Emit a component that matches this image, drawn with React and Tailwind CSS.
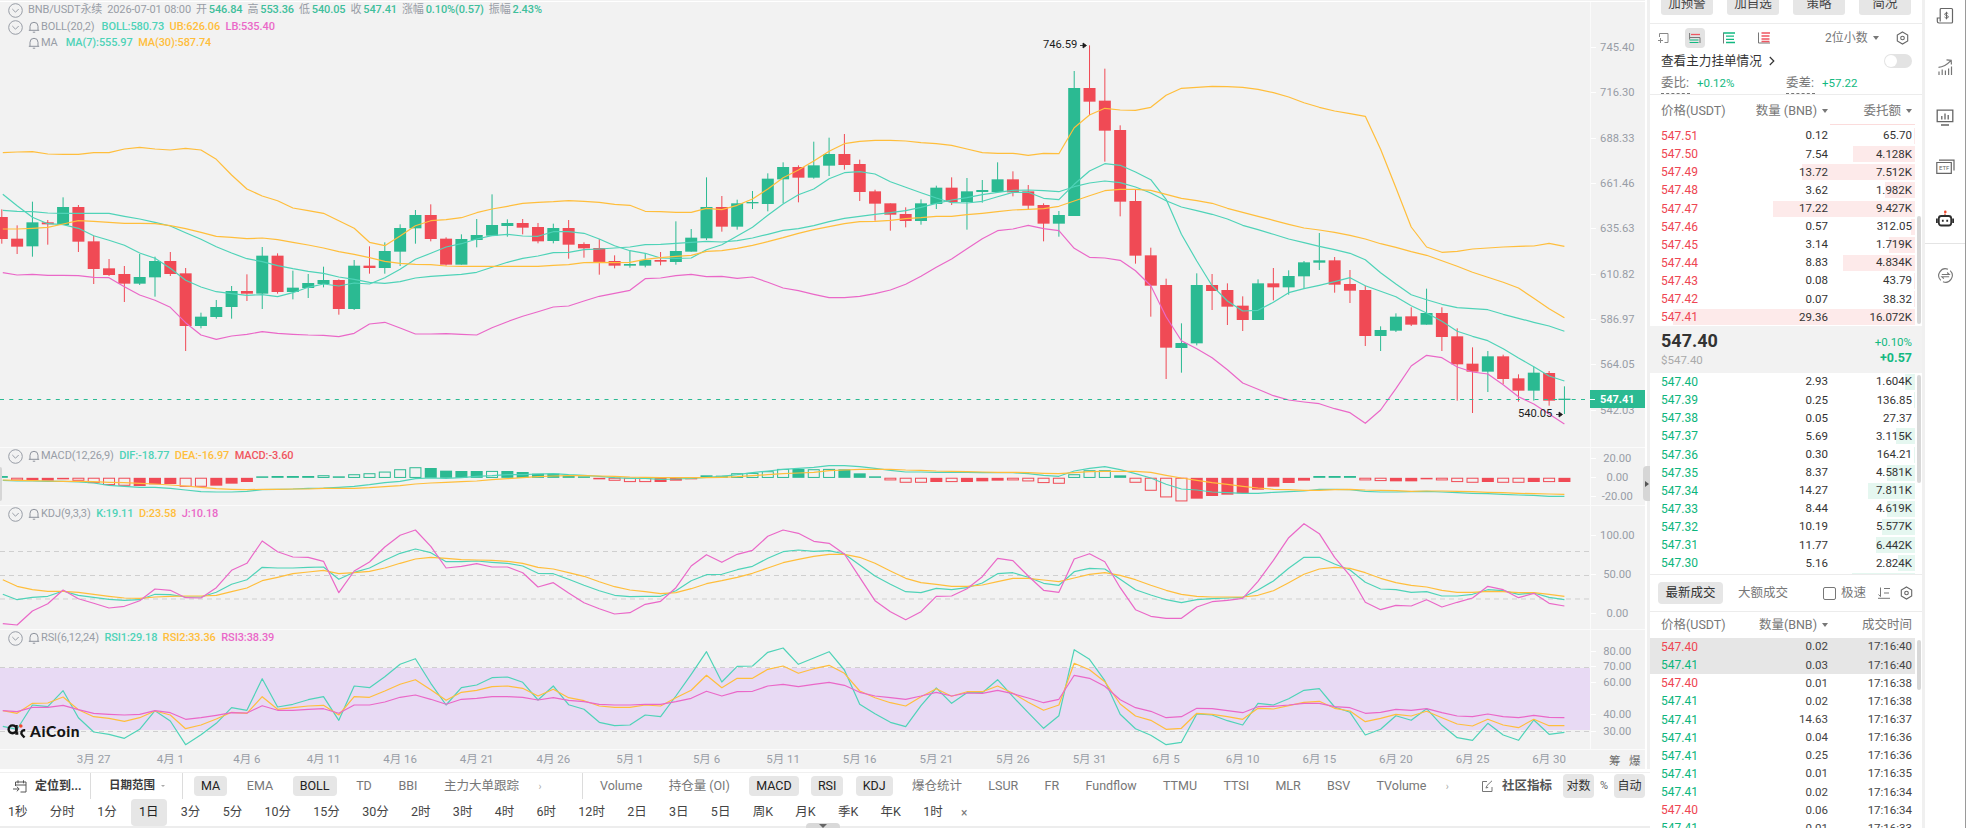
import clsx from "clsx";

const GREEN = "#2bba92";
const RED = "#f04a55";
const TEAL = "#4fd3b8";
const ORANGE = "#ffbe3c";
const PINK = "#ea68c8";

const STEP = 15.32;
const PLOT_W = 1590;
const SUB_TOP = 440;
const xAt = (i) => 1.8 + i * STEP;

// ----- Series data, y is stored in thirds of a pixel -----
// candle: direction (1 up, 0 down), high, body top, body bottom, low
const candles = [
  [0, 628, 651, 717, 731], [0, 676, 716, 740, 762], [1, 605, 667, 739, 770], [0, 660, 667, 673, 734], [1, 592, 621, 675, 675],
  [0, 615, 621, 725, 756], [0, 707, 724, 807, 852], [0, 777, 805, 825, 828], [0, 798, 822, 851, 906], [1, 762, 831, 851, 855],
  [1, 770, 783, 832, 890], [0, 756, 783, 822, 828], [0, 804, 820, 978, 1053], [1, 938, 950, 978, 985], [1, 900, 921, 951, 956],
  [1, 858, 873, 921, 956], [0, 823, 873, 881, 903], [1, 741, 767, 881, 927], [0, 760, 767, 876, 881], [1, 812, 863, 876, 898],
  [1, 822, 849, 864, 894], [1, 800, 840, 852, 862], [0, 838, 840, 927, 944], [1, 780, 797, 927, 930], [0, 739, 797, 804, 821],
  [1, 727, 753, 804, 821], [1, 673, 684, 755, 798], [1, 630, 645, 685, 731], [0, 613, 645, 717, 724], [0, 712, 716, 794, 797],
  [1, 703, 717, 794, 794], [1, 657, 705, 720, 742], [1, 583, 675, 707, 707], [1, 658, 669, 678, 710], [0, 657, 669, 683, 703],
  [0, 669, 681, 724, 730], [1, 671, 684, 723, 730], [0, 660, 684, 734, 776], [0, 727, 732, 745, 773], [0, 717, 744, 787, 824],
  [0, 766, 783, 797, 805], [1, 753, 792, 797, 803], [1, 760, 780, 797, 802], [0, 756, 780, 785, 796], [1, 664, 753, 786, 794],
  [1, 687, 713, 755, 755], [1, 532, 621, 715, 720], [0, 588, 621, 680, 695], [1, 599, 610, 680, 689], [1, 573, 606, 610, 627],
  [1, 520, 536, 612, 634], [1, 487, 501, 538, 610], [0, 496, 501, 533, 607], [1, 425, 496, 533, 536], [1, 413, 462, 497, 528],
  [0, 402, 462, 495, 509], [0, 479, 492, 576, 603], [0, 569, 574, 611, 662], [0, 610, 610, 644, 692], [0, 622, 642, 663, 682],
  [1, 598, 610, 663, 674], [1, 557, 563, 612, 627], [0, 532, 563, 606, 615], [1, 534, 574, 606, 689], [1, 540, 570, 576, 608],
  [1, 487, 538, 576, 578], [0, 514, 538, 577, 589], [0, 555, 574, 617, 627], [0, 610, 615, 671, 724], [1, 633, 645, 671, 710],
  [1, 213, 264, 648, 648], [0, 136, 264, 305, 345], [0, 206, 302, 392, 485], [0, 376, 390, 605, 649], [0, 568, 603, 767, 791],
  [0, 743, 766, 857, 950], [0, 836, 855, 1043, 1137], [1, 970, 1029, 1044, 1118], [1, 820, 855, 1030, 1036], [0, 822, 855, 873, 930],
  [0, 850, 870, 920, 975], [0, 889, 917, 960, 993], [1, 838, 850, 960, 960], [0, 804, 850, 862, 901], [1, 811, 828, 862, 884],
  [1, 783, 787, 829, 865], [1, 699, 781, 788, 810], [0, 771, 781, 854, 878], [0, 810, 852, 872, 909], [0, 857, 870, 1008, 1038],
  [1, 979, 990, 1008, 1053], [1, 940, 950, 992, 996], [0, 922, 949, 974, 978], [1, 866, 939, 974, 974], [0, 922, 939, 1011, 1053],
  [0, 985, 1009, 1093, 1202], [0, 1042, 1091, 1115, 1239], [1, 1053, 1069, 1115, 1176], [0, 1064, 1069, 1137, 1152], [0, 1123, 1135, 1172, 1205],
  [1, 1100, 1118, 1172, 1202], [0, 1113, 1119, 1202, 1217], [1, 1159, 1196, 1200, 1242],
];

const ub = [
  458, 456, 455, 462, 463, 463, 458, 458, 447, 442, 447, 450, 445, 450, 478, 525, 567, 588, 602, 624, 632, 640, 662, 685, 727, 737, 708, 677, 662, 659, 653, 638, 627, 619, 610, 607, 605,
  602, 604, 607, 613, 616, 634, 635, 637, 637, 625, 629, 616, 597, 567, 533, 510, 483, 454, 431, 424, 421, 421, 423, 428, 431, 436, 447, 458, 460, 460, 466, 460, 461, 383, 345,
  325, 330, 331, 322, 286, 265, 262, 259, 260, 262, 268, 278, 291, 308, 322, 333, 341, 349, 448, 563, 681, 741, 757, 754, 747, 744, 741, 739, 738, 730, 739,
];
const boll = [
  631, 634, 635, 639, 640, 640, 640, 640, 649, 657, 667, 678, 698, 718, 740, 759, 776, 785, 797, 806, 814, 820, 831, 838, 847, 850, 845, 834, 829, 826, 823, 817, 802, 787, 775, 768, 758,
  757, 749, 747, 744, 741, 734, 733, 730, 727, 724, 726, 722, 714, 703, 691, 686, 677, 665, 655, 649, 643, 638, 632, 622, 610, 600, 593, 584, 577, 571, 570, 572, 575, 560, 549,
  543, 548, 561, 579, 602, 621, 632, 643, 657, 676, 689, 703, 717, 728, 739, 749, 760, 779, 818, 852, 884, 899, 913, 923, 926, 929, 943, 955, 967, 978, 994,
];
const lb = [
  818, 825, 823, 826, 826, 827, 832, 833, 860, 885, 901, 922, 968, 1005, 1018, 1008, 1003, 995, 1000, 1003, 1005, 1006, 1010, 1000, 972, 967, 984, 1002, 1002, 1001, 1003, 1005, 983, 965, 949, 935, 921,
  918, 903, 889, 880, 871, 836, 834, 827, 823, 830, 829, 835, 831, 847, 864, 872, 883, 893, 893, 889, 881, 870, 853, 829, 802, 777, 746, 716, 692, 687, 676, 686, 692, 745, 772,
  774, 781, 812, 857, 950, 1022, 1046, 1073, 1109, 1149, 1168, 1187, 1200, 1206, 1211, 1226, 1238, 1270, 1230, 1166, 1098, 1066, 1073, 1101, 1116, 1122, 1154, 1190, 1212, 1242, 1272,
];
const ma7 = [
  583, 617, 652, 671, 674, 685, 707, 721, 736, 759, 775, 805, 841, 861, 875, 881, 886, 884, 890, 878, 862, 852, 858, 849, 852, 833, 808, 778, 760, 741, 731, 717, 707, 703, 708, 709, 695,
  695, 700, 717, 737, 752, 760, 774, 775, 774, 749, 734, 708, 682, 646, 612, 584, 567, 536, 518, 515, 522, 545, 562, 578, 594, 608, 609, 604, 590, 577, 577, 595, 599, 553, 513,
  491, 496, 516, 539, 598, 703, 783, 857, 903, 933, 931, 907, 878, 866, 856, 845, 833, 857, 874, 890, 917, 939, 964, 994, 1009, 1022, 1046, 1074, 1100, 1128, 1143,
];
const ma30 = [
  687, 687, 685, 682, 672, 662, 664, 667, 670, 670, 671, 677, 686, 697, 709, 712, 716, 714, 719, 727, 735, 744, 755, 763, 773, 784, 790, 793, 794, 798, 799, 799, 799, 799, 799, 799, 796,
  794, 788, 787, 788, 787, 778, 773, 769, 766, 754, 752, 745, 736, 725, 713, 700, 689, 680, 671, 665, 664, 661, 656, 653, 649, 649, 644, 640, 635, 630, 628, 626, 619, 603, 587,
  572, 568, 568, 571, 583, 595, 602, 610, 625, 637, 649, 661, 673, 684, 690, 697, 706, 717, 731, 742, 755, 766, 782, 799, 817, 832, 847, 864, 895, 926, 953,
];

// macd bar: far edge from the zero line, negative means hollow
const macdBars = [
  108, -121, 121, 122, 117, -122, -129, -135, -137, 138, 133, 132, -140, -140, 137, 131, 126, 109, 108, 108, 108, -106, 109, -103, -100, -95, -88, -82, 84, 92, 93, 93, -93, 93, 96, 101, 101,
  107, 109, 118, -122, -126, -126, 126, 122, 117, 106, 107, -100, -99, -94, -87, 87, -88, -87, 88, 100, 109, -121, -128, -128, 126, -126, 126, 124, 122, -121, -124, -129, -131, -103, -91,
  -91, 106, -128, -152, -172, -184, 176, 168, 164, 160, 149, 140, 129, 122, 108, 108, 108, -121, -123, 124, 124, 118, -121, -126, -128, 126, -128, -128, 126, -126, 126,
];
const dif = [
  121, 123, 123, 124, 124, 126, 129, 136, 139, 142, 142, 145, 150, 155, 156, 156, 154, 149, 148, 147, 145, 144, 142, 139, 134, 128, 124, 116, 114, 115, 113, 109, 107, 104, 104, 102, 101,
  104, 106, 109, 113, 115, 115, 118, 117, 115, 112, 109, 104, 98, 93, 88, 85, 82, 77, 77, 80, 85, 91, 96, 96, 97, 97, 97, 98, 98, 98, 101, 106, 109, 93, 85,
  80, 89, 101, 114, 133, 147, 150, 156, 158, 160, 160, 157, 155, 153, 148, 148, 149, 154, 156, 156, 155, 154, 156, 158, 160, 161, 163, 165, 166, 169, 169,
];
const dea = [
  120, 121, 122, 123, 124, 124, 125, 127, 128, 130, 132, 135, 138, 142, 146, 148, 149, 148, 148, 147, 147, 145, 145, 145, 143, 140, 137, 132, 129, 127, 125, 123, 119, 116, 113, 110, 108,
  107, 107, 108, 109, 111, 112, 113, 113, 113, 113, 112, 110, 107, 104, 101, 99, 97, 92, 90, 88, 88, 88, 90, 91, 93, 94, 95, 96, 97, 97, 98, 100, 101, 98, 95,
  94, 94, 94, 97, 106, 114, 121, 128, 133, 139, 144, 148, 149, 151, 151, 149, 148, 150, 151, 152, 154, 153, 153, 154, 155, 157, 158, 160, 161, 162, 163,
];

const kLine = [
  463, 479, 472, 469, 453, 466, 472, 478, 481, 479, 463, 464, 471, 471, 457, 433, 419, 382, 384, 384, 382, 381, 418, 397, 384, 361, 340, 327, 338, 365, 365, 363, 367, 370, 378, 400, 401,
  418, 436, 452, 466, 470, 469, 469, 452, 422, 404, 403, 389, 379, 355, 335, 330, 334, 332, 342, 375, 408, 433, 455, 458, 445, 449, 443, 429, 401, 398, 412, 430, 436, 395, 385,
  387, 418, 449, 465, 479, 488, 479, 476, 474, 472, 450, 423, 385, 352, 352, 372, 390, 427, 447, 449, 457, 455, 468, 468, 463, 449, 452, 463, 459, 472, 479,
];
const dLine = [
  419, 439, 449, 454, 454, 457, 463, 469, 474, 475, 471, 469, 468, 468, 466, 455, 444, 422, 412, 401, 396, 391, 401, 398, 394, 384, 370, 357, 352, 355, 359, 360, 361, 364, 370, 382, 387,
  398, 409, 425, 440, 450, 455, 461, 458, 446, 431, 422, 412, 400, 384, 368, 358, 349, 343, 343, 352, 370, 393, 415, 428, 433, 439, 439, 435, 425, 415, 415, 420, 425, 414, 403,
  398, 406, 419, 436, 451, 463, 469, 471, 471, 471, 466, 452, 428, 403, 387, 382, 385, 398, 415, 428, 436, 441, 451, 457, 457, 454, 455, 458, 458, 463, 469,
];
const jLine = [
  551, 555, 513, 491, 450, 476, 490, 504, 499, 482, 447, 451, 473, 474, 443, 391, 370, 303, 335, 351, 352, 364, 458, 393, 366, 321, 286, 270, 319, 384, 379, 371, 381, 381, 398, 441, 428,
  459, 488, 506, 522, 518, 493, 484, 443, 378, 344, 367, 343, 331, 289, 270, 280, 304, 310, 342, 412, 482, 515, 539, 515, 469, 468, 446, 410, 355, 362, 408, 451, 457, 357, 341,
  365, 443, 509, 529, 535, 535, 501, 485, 481, 475, 424, 361, 293, 251, 281, 352, 407, 487, 509, 496, 498, 479, 501, 487, 474, 439, 449, 473, 460, 490, 498,
];

const rsi1 = [
  859, 868, 795, 800, 752, 833, 876, 883, 895, 868, 812, 843, 914, 884, 850, 803, 811, 716, 801, 793, 779, 770, 841, 738, 743, 710, 673, 656, 730, 795, 743, 735, 713, 711, 727, 780, 738,
  794, 808, 847, 857, 855, 825, 830, 768, 703, 635, 726, 679, 678, 637, 624, 673, 654, 635, 690, 793, 821, 847, 860, 797, 744, 790, 758, 758, 719, 770, 818, 865, 827, 629, 658,
  722, 823, 866, 886, 914, 907, 822, 825, 842, 855, 790, 795, 776, 751, 746, 801, 817, 885, 868, 827, 841, 806, 856, 893, 901, 850, 885, 901, 840, 883, 877,
];
const rsi2 = [
  812, 820, 790, 789, 771, 809, 830, 835, 844, 833, 813, 825, 866, 855, 837, 817, 820, 770, 808, 803, 798, 796, 825, 770, 772, 753, 733, 719, 749, 781, 757, 751, 740, 738, 745, 768, 748,
  773, 782, 798, 802, 802, 795, 798, 773, 751, 706, 743, 715, 715, 688, 678, 700, 686, 676, 700, 753, 773, 788, 798, 770, 746, 769, 755, 755, 738, 760, 787, 811, 795, 670, 689,
  725, 792, 828, 841, 868, 865, 820, 823, 830, 838, 805, 807, 797, 787, 784, 805, 813, 845, 835, 823, 828, 814, 833, 852, 858, 838, 855, 863, 838, 857, 857,
];
const rsi3 = [
  812, 815, 802, 802, 796, 809, 820, 823, 825, 823, 812, 818, 838, 833, 826, 818, 819, 797, 811, 811, 808, 806, 820, 795, 795, 786, 772, 765, 778, 793, 778, 775, 770, 770, 772, 780, 773,
  781, 785, 793, 795, 795, 793, 793, 785, 775, 754, 768, 755, 754, 738, 733, 740, 733, 727, 736, 757, 768, 773, 778, 768, 757, 768, 759, 760, 751, 761, 774, 788, 778, 706, 715,
  739, 779, 803, 814, 833, 830, 805, 806, 812, 818, 800, 799, 795, 790, 790, 800, 803, 820, 817, 808, 811, 806, 818, 828, 830, 822, 830, 833, 826, 832, 833,
];

const dates = ["3月 27", "4月 1", "4月 6", "4月 11", "4月 16", "4月 21", "4月 26", "5月 1", "5月 6", "5月 11", "5月 16", "5月 21", "5月 26", "5月 31", "6月 5", "6月 10", "6月 15", "6月 20", "6月 25", "6月 30"];

const asks = [
  ["547.51", "0.12", "65.70", 1],
  ["547.50", "7.54", "4.128K", 62],
  ["547.49", "13.72", "7.512K", 113],
  ["547.48", "3.62", "1.982K", 30],
  ["547.47", "17.22", "9.427K", 142],
  ["547.46", "0.57", "312.05", 4.5],
  ["547.45", "3.14", "1.719K", 26],
  ["547.44", "8.83", "4.834K", 72.5],
  ["547.43", "0.08", "43.79", 0.7],
  ["547.42", "0.07", "38.32", 0.6],
  ["547.41", "29.36", "16.072K", 242],
];
const bids = [
  ["547.40", "2.93", "1.604K", 10],
  ["547.39", "0.25", "136.85", 1],
  ["547.38", "0.05", "27.37", 0],
  ["547.37", "5.69", "3.115K", 19],
  ["547.36", "0.30", "164.21", 1],
  ["547.35", "8.37", "4.581K", 28],
  ["547.34", "14.27", "7.811K", 47],
  ["547.33", "8.44", "4.619K", 28],
  ["547.32", "10.19", "5.577K", 33.5],
  ["547.31", "11.77", "6.442K", 39],
  ["547.30", "5.16", "2.824K", 17],
];
const trades = [
  ["547.40", "0.02", "17:16:40", 0],
  ["547.41", "0.03", "17:16:40", 1],
  ["547.40", "0.01", "17:16:38", 0],
  ["547.41", "0.02", "17:16:38", 1],
  ["547.41", "14.63", "17:16:37", 1],
  ["547.41", "0.04", "17:16:36", 1],
  ["547.41", "0.25", "17:16:36", 1],
  ["547.41", "0.01", "17:16:35", 1],
  ["547.41", "0.02", "17:16:34", 1],
  ["547.40", "0.06", "17:16:34", 0],
  ["547.41", "0.01", "17:16:33", 1],
];

// ----- Chart helpers -----
const Line = ({ data, color, top = 0 }) => (
  <polyline
    points={data.map((v, i) => `${i === 0 ? 2.8 : xAt(i).toFixed(1)},${(v / 3 - top).toFixed(1)}`).join(" ")}
    fill="none"
    stroke={color}
    strokeWidth="1.2"
    strokeLinejoin="round"
  />
);

const AxisLabels = ({ items }) =>
  items.map(([text, y]) => (
    <g key={text}>
      <path d={`M1591 ${Math.round(y) + 0.5}h5`} stroke="#ffffff" />
      <text x="1617.3" y={y + 4} textAnchor="middle" className="fill-[#989da6] text-[11.2px]">{text}</text>
    </g>
  ));

const Dashed = ({ y }) => <path d={`M0 ${y}H${PLOT_W}`} stroke="#cfcfcf" strokeDasharray="5 4" />;

const Toggle = () => (
  <svg width="15" height="15" viewBox="0 0 15 15" className="mr-[5px] shrink-0" fill="none" stroke="#989da6">
    <circle cx="7.5" cy="7.5" r="6.8" />
    <path d="M4.3 6l3.2 3.2L10.7 6" />
  </svg>
);

const BellIcon = () => (
  <svg width="12" height="12" viewBox="0 0 12 12" className="mr-px shrink-0" fill="none" stroke="#8d929c">
    <path d="M2 9.3V5.3a4 4 0 0 1 8 0v4M.8 9.3h10.4M4.8 11.2h2.4" />
  </svg>
);

const Legend = ({ name, values, className, gap = "mr-[5.5px]", toggle = true }) => (
  <div className={clsx("absolute left-[8px] flex h-4 items-center whitespace-nowrap text-[11px] leading-4 tracking-[-0.1px] text-[#989da6]", className)}>
    {toggle ? <Toggle /> : <div className="w-5" />}
    <BellIcon />
    <span className={gap}>{name}</span>
    {values.map(([text, color]) => (
      <span key={text} className={clsx("mr-[5.5px] font-medium", color)}>{text}</span>
    ))}
  </div>
);

const PricePanel = () => {
  const quote = [["开", "546.84"], ["高", "553.36"], ["低", "540.05"], ["收", "547.41"], ["涨幅", "0.10%(0.57)"], ["振幅", "2.43%"]];
  const labels = [["745.40", 47], ["716.30", 92.3], ["688.33", 137.7], ["661.46", 183], ["635.63", 228.3], ["610.82", 273.7], ["586.97", 319], ["564.05", 364.3], ["542.03", 410]];
  return (
    <div className="relative h-[447px]">
      <svg width="1645" height="447" className="block">
        <path d="M0 1.5H1645" stroke="#fff" />
        <path d="M1590.5 2V447" stroke="#fafafa" />
        {candles.map(([up, high, top, bottom, low], i) => (
          <g key={i} fill={up ? GREEN : RED}>
            <rect x={xAt(i) - 0.5} y={high / 3} width="1" height={(low - high) / 3} />
            <rect x={xAt(i) - 6} y={top / 3} width="12" height={Math.max((bottom - top) / 3, 1)} />
          </g>
        ))}
        <Line data={boll} color={TEAL} />
        <Line data={ub} color={ORANGE} />
        <Line data={lb} color={PINK} />
        <Line data={ma7} color={TEAL} />
        <Line data={ma30} color={ORANGE} />
        <path d="M0 399.5H1590" stroke={GREEN} strokeDasharray="4 5.3" />
        <AxisLabels items={labels} />
        <rect x="1590" y="390" width="55" height="18" fill={GREEN} />
        <path d="M1590 399.5h5" stroke="#fff" />
        <text x="1617.3" y="403" textAnchor="middle" className="fill-white text-[11px] font-bold">547.41</text>
        <g className="fill-[#1c1c1c] text-[11.2px]">
          <text x="1043" y="48.3">746.59</text>
          <text x="1518" y="417">540.05</text>
        </g>
        <path d="M1080 45.5h6m-3-2.500l3.500 2.500-3.500 2.500zM1556 414.500h6m-3-2.500l3.500 2.500-3.500 2.500z" fill="#1c1c1c" stroke="#1c1c1c" strokeWidth=".8" />
      </svg>
      <div className="absolute left-[8px] top-[2px] flex h-4 items-center whitespace-nowrap text-[11px] leading-4 tracking-[-0.12px] text-[#989da6]">
        <Toggle />
        <span className="mr-[5px]">BNB/USDT永续</span>
        <span className="mr-[5px]">2026-07-01 08:00</span>
        {quote.map(([label, value]) => (
          <span key={label} className="mr-[5px]">
            {label}
            <span className="ml-[2px] font-medium text-[#3fbf9c]">{value}</span>
          </span>
        ))}
      </div>
      <Legend className="top-[19px]" gap="mr-[7px]" name="BOLL(20,2)" values={[["BOLL:580.73", "text-[#4fd3b8]"], ["UB:626.06", "text-[#ffbe3c]"], ["LB:535.40", "text-[#ea68c8]"]]} />
      <Legend className="top-[35px]" gap="mr-[8px]" toggle={false} name="MA" values={[["MA(7):555.97", "text-[#4fd3b8]"], ["MA(30):587.74", "text-[#ffbe3c]"]]} />
    </div>
  );
};

const MacdPanel = () => {
  const top = 447 - SUB_TOP;
  const zero = 113.5;
  return (
    <div className="relative h-[58px]">
      <svg width="1645" height="58" className="block">
        <path d="M0 .5H1645M1590.5 0V58" stroke="#fbfbfb" />
        {macdBars.map((v, i) => {
          const edge = Math.abs(v);
          const color = edge < zero ? GREEN : RED;
          const y = Math.min(edge, zero) / 3 - top;
          const h = Math.max(Math.abs(edge - zero) / 3, 1.5);
          return v < 0 ? (
            <rect key={i} x={xAt(i) - 5.5} y={y + 0.4} width="11" height={Math.max(h - 0.8, 1)} fill="none" stroke={color} />
          ) : (
            <rect key={i} x={xAt(i) - 6} y={y} width="12" height={h} fill={color} />
          );
        })}
        <Line data={dif} color={TEAL} top={top} />
        <Line data={dea} color={ORANGE} top={top} />
        <AxisLabels items={[["20.00", 11.4], ["0.00", 30.4], ["-20.00", 49.4]]} />
      </svg>
      <Legend className="top-[1px]" name="MACD(12,26,9)" values={[["DIF:-18.77", "text-[#4fd3b8]"], ["DEA:-16.97", "text-[#ffbe3c]"], ["MACD:-3.60", "text-[#f0555f]"]]} />
    </div>
  );
};

const KdjPanel = () => {
  const top = 505 - SUB_TOP;
  return (
    <div className="relative h-[124px]">
      <svg width="1645" height="124" className="block">
        <path d="M0 .5H1645M1590.5 0V124" stroke="#fbfbfb" />
        <Dashed y={46.5} />
        <Dashed y={70.5} />
        <Dashed y={94} />
        <Line data={kLine} color={TEAL} top={top} />
        <Line data={dLine} color={ORANGE} top={top} />
        <Line data={jLine} color={PINK} top={top} />
        <AxisLabels items={[["100.00", 30.4], ["50.00", 69.4], ["0.00", 108.4]]} />
      </svg>
      <Legend className="top-[1px]" name="KDJ(9,3,3)" values={[["K:19.11", "text-[#4fd3b8]"], ["D:23.58", "text-[#ffbe3c]"], ["J:10.18", "text-[#ea68c8]"]]} />
    </div>
  );
};

const RsiPanel = () => {
  const top = 629 - SUB_TOP;
  return (
    <div className="relative h-[120px]">
      <svg width="1645" height="120" className="block">
        <path d="M0 .5H1645M1590.5 0V120" stroke="#fbfbfb" />
        <rect y="39" width={PLOT_W} height="62" fill="#e8daf4" />
        <Dashed y={38.5} />
        <Dashed y={102.5} />
        <Line data={rsi1} color={TEAL} top={top} />
        <Line data={rsi2} color={ORANGE} top={top} />
        <Line data={rsi3} color={PINK} top={top} />
        <AxisLabels items={[["80.00", 22], ["70.00", 37.3], ["60.00", 53.3], ["40.00", 85.3], ["30.00", 101.7]]} />
      </svg>
      <Legend className="top-[1px]" name="RSI(6,12,24)" values={[["RSI1:29.18", "text-[#4fd3b8]"], ["RSI2:33.36", "text-[#ffbe3c]"], ["RSI3:38.39", "text-[#ea68c8]"]]} />
      <div className="absolute left-[7px] top-[94px] flex h-[16px] items-center gap-[4px]">
        <svg width="19" height="15" viewBox="0 0 19 15" fill="none" stroke="#151515" strokeWidth="2.4">
          <circle cx="5.5" cy="5.3" r="3.9" />
          <path d="M9.5 1v8.500h1.800" />
          <path d="M18.200 6.200h-1.200a2.800 2.800 0 0 0-1.800 4.800l2.300 2.500" />
          <circle cx="13.8" cy="2" r="1.8" fill="#f0492f" stroke="none" />
        </svg>
        <span className="pt-px font-['Lato'] text-[15.500px] font-black leading-none tracking-[0.6px] text-[#151515]">AiCoin</span>
      </div>
    </div>
  );
};

// ----- Toolbars under the chart -----
const Tag = ({ children, active }) => (
  <span className={clsx("flex h-5 shrink-0 items-center rounded px-[7px]", active ? "bg-[#e6e6e6] text-[#222]" : "text-[#777]")}>{children}</span>
);

const mainTags = ["MA", "EMA", "BOLL", "TD", "BBI", "主力大单跟踪"];
const subTags = ["Volume", "持仓量 (OI)", "MACD", "RSI", "KDJ", "爆仓统计", "LSUR", "FR", "Fundflow", "TTMU", "TTSI", "MLR", "BSV", "TVolume"];
const activeTags = ["MA", "BOLL", "MACD", "RSI", "KDJ"];
const periods = ["1秒", "分时", "1分", "1日", "3分", "5分", "10分", "15分", "30分", "2时", "3时", "4时", "6时", "12时", "2日", "3日", "5日", "周K", "月K", "季K", "年K", "1时"];

const IndicatorBar = () => (
  <div className="mt-[3px] flex h-[27px] items-center border-t border-[#f0f0f0] text-[12.5px]">
    <div className="flex h-full w-[91px] items-center border-r border-[#dcdcdc] pl-[13px] font-bold text-[#3c3c3c]">
      <svg width="14" height="13" viewBox="0 0 14 13" className="mr-2" fill="none" stroke="#555">
        <path d="M2.500 6V2h10.500v10H7.500M5 .3v3M10.500.3v3M2.500 5h10.500M0 9h6M3.800 6.700L6.200 9l-2.400 2.300" />
      </svg>
      <span className="text-[12px]">定位到...</span>
    </div>
    <div className="flex h-full w-[92px] items-center border-r border-[#dcdcdc] pl-[18px] text-[11.5px] font-bold text-[#3c3c3c]">
      日期范围
      <span className="ml-[6px] border-x-[2px] border-t-[2px] border-x-transparent border-t-[#aaa]" />
    </div>
    <div className="flex w-[399px] items-center gap-[12.6px] pl-[11px]">
      {mainTags.map((t) => <Tag key={t} active={activeTags.includes(t)}>{t}</Tag>)}
      <span className="text-[10px] text-[#aaa]">›</span>
    </div>
    <div className="flex h-full w-[892px] items-center gap-[12.3px] border-l border-[#dcdcdc] pl-[10px]">
      {subTags.map((t) => <Tag key={t} active={activeTags.includes(t)}>{t}</Tag>)}
      <span className="text-[10px] text-[#aaa]">›</span>
    </div>
    <div className="flex items-center pl-[8px] text-[#555]">
      <svg width="11" height="12" viewBox="0 0 11 12" fill="none" stroke="#777">
        <path d="M5 1.500H.5v10h9.500V7M4 8l1-2.500L10 .8M3.800 8l2.400-.6" />
      </svg>
      <span className="ml-[9px] font-bold text-[#555]">社区指标</span>
    </div>
    <div className="ml-auto mr-[5px] flex items-center text-[#333]">
      <span className="flex h-6 w-[31px] items-center justify-center rounded-sm bg-[#e6e6e6] text-[12px]">对数</span>
      <span className="w-[20px] text-center text-[11px] text-[#666]">%</span>
      <span className="flex h-6 w-[31px] items-center justify-center rounded-sm bg-[#e6e6e6] text-[12px]">自动</span>
    </div>
  </div>
);

const PeriodBar = () => (
  <div className="flex h-[27px] items-center gap-[6.3px] text-[12.5px] text-[#444]">
    {periods.map((p) => (
      <span key={p} className={clsx("flex h-full shrink-0 items-center rounded px-2", p === "1日" && "bg-[#e6e6e6] text-[#222]")}>{p}</span>
    ))}
    <span className="pl-1 text-[12px] text-[#777]">×</span>
  </div>
);

const ChartArea = () => (
  <div className="relative flex w-[1650px] shrink-0 flex-col bg-[#f0f0f0]">
    <div className="w-[1647px] border-r-2 border-white bg-[#f2f2f2]">
      <PricePanel />
      <MacdPanel />
      <KdjPanel />
      <RsiPanel />
      <svg width="1645" height="20" className="block text-[11.5px]">
        <path d="M0 .5H1645" stroke="#fbfbfb" />
        {dates.map((d, i) => (
          <text key={d} x={xAt(6 + i * 5)} y="14" textAnchor="middle" className="fill-[#989da6]">{d}</text>
        ))}
        <text x="1609" y="15.5" className="fill-[#6f6f6f]">筹</text>
        <text x="1629" y="15.5" className="fill-[#6f6f6f]">爆</text>
      </svg>
    </div>
    <div className="h-[57px] w-[1650px] bg-white">
      <IndicatorBar />
      <PeriodBar />
    </div>
    <div className="h-0.5 bg-[#ededed]" />
    <div className="absolute left-0 top-[467px] h-[34px] w-[2px] rounded-r bg-[#d6d6d6]" />
    <div className="absolute left-[1643px] top-[466px] flex h-[35px] w-[7px] items-center justify-center rounded-l bg-[#d6d6d6]">
      <span className="border-y-[3px] border-l-[4px] border-y-transparent border-l-[#555]" />
    </div>
    <div className="absolute bottom-0 left-[806px] flex h-[5px] w-[34px] items-center justify-center rounded-t bg-[#d9d9d9]">
      <span className="border-x-[4px] border-t-[4px] border-x-transparent border-t-[#666]" />
    </div>
  </div>
);

// ----- Order book -----
const Caret = () => <span className="ml-[5px] inline-block border-x-[3.5px] border-t-[4px] border-x-transparent border-t-[#777]" />;

const HexIcon = () => (
  <svg width="13" height="14" viewBox="0 0 13 14" fill="none" stroke="#666" strokeWidth="1.1">
    <path d="M6.500 1L11.700 4v6L6.500 13 1.300 10V4z" />
    <circle cx="6.5" cy="7" r="1.8" />
  </svg>
);

const BookRow = ({ row, side }) => {
  const [price, qty, amount, depth] = row;
  return (
    <div className="relative flex h-[18.14px] items-center pl-[11px] text-[11.5px] text-[#333]">
      <div
        className={clsx("absolute right-[7px] top-[1px] h-4", side === "ask" ? "bg-[#fdeaea]" : "bg-[#e5f7f0]")}
        style={{ width: depth }}
      />
      <span className={clsx("relative w-[70px] text-[12px]", side === "ask" ? "text-[#ee4652]" : "text-[#0cb57c]")}>{price}</span>
      <span className="relative w-[97px] text-right">{qty}</span>
      <span className="relative w-[84px] text-right">{amount}</span>
    </div>
  );
};

const OrderBook = () => (
  <div className="h-[575px] overflow-hidden border-b border-[#ececec]">
    <div className="flex h-[23px] items-start gap-[14px] overflow-hidden pl-[11px]">
      {["加预警", "加自选", "策略", "简况"].map((t) => (
        <span key={t} className="-mt-[7px] flex h-[22px] w-[52px] shrink-0 items-center justify-center rounded-[3px] bg-[#e6e6e6] text-[12.5px] text-[#444]">{t}</span>
      ))}
    </div>
    <div className="flex h-[29px] items-center border-t border-[#ececec] pl-[8px]">
      <svg width="12" height="12" viewBox="0 0 12 12" fill="none" stroke="#888">
        <path d="M1.500 5V1.500h8.500v9H6.500M0 8.500h5M2.500 6v5" />
      </svg>
      <div className="ml-[15px] flex size-5 items-center justify-center rounded bg-[#e3e3e3]">
        <svg width="12" height="12" viewBox="0 0 12 12" fill="none">
          <path d="M.6 1v6.500M11 5.500V11M.6 5.500H11" stroke="#777" />
          <path d="M2 2.500h9" stroke="#ee5661" strokeWidth="1.3" />
          <path d="M.6 8h8.900M.6 10.500h8.900" stroke="#12b981" strokeWidth="1.2" />
        </svg>
      </div>
      <svg width="12" height="12" viewBox="0 0 12 12" className="ml-[18px]" fill="none">
        <path d="M.5.5v11" stroke="#777" />
        <path d="M.5 1h11.500M3 4.200h8M3 7.300h8M3 10.500h9" stroke="#12b981" strokeWidth="1.3" />
      </svg>
      <svg width="12" height="12" viewBox="0 0 12 12" className="ml-[23px]" fill="none">
        <path d="M.5.5v10.500h11.500" stroke="#777" />
        <path d="M3.500 1h8.500M3.500 4h8M3.500 7h8M3.500 9.500h8" stroke="#ee5661" strokeWidth="1.3" />
      </svg>
      <span className="ml-[55px] text-[12px] text-[#777]">2位小数</span>
      <Caret />
      <span className="ml-[17px]"><HexIcon /></span>
    </div>
    <div className="flex h-[18px] items-center pl-[11px] pr-[10px] text-[12.6px] text-[#333]">
      查看主力挂单情况
      <svg width="6" height="10" viewBox="0 0 6 10" className="ml-[7px]" fill="none" stroke="#333" strokeWidth="1.2">
        <path d="M.8 1l4 4-4 4" />
      </svg>
      <span className="ml-auto flex h-[14px] w-[28px] items-center rounded-full bg-[#e3e3e3] pl-px">
        <span className="size-3 rounded-full bg-white" />
      </span>
    </div>
    <div className="flex h-[25px] items-end border-b border-[#ececec] pl-[11px] text-[12.5px] text-[#777]">
      <span className="flex h-[22px] w-[29px] items-center border-b border-dashed border-[#777] pt-px">委比:</span>
      <span className="w-[96px] pb-[2px] pl-[7px] text-[11.5px] text-[#12b981]">+0.12%</span>
      <span className="flex h-[22px] w-[29px] items-center border-b border-dashed border-[#777] pt-px">委差:</span>
      <span className="pb-[2px] pl-[7px] text-[11.5px] text-[#12b981]">+57.22</span>
    </div>
    <div className="flex h-[29px] items-center pl-[11px] pt-[3px] text-[12.5px] text-[#777]">
      <span className="w-[82px]">价格(USDT)</span>
      <span className="flex w-[85px] items-center justify-end">数量 (BNB)<Caret /></span>
      <span className="flex w-[84px] items-center justify-end">委托额<Caret /></span>
    </div>
    <div className="ml-auto mr-[7px] h-[3px] w-[85px] border-t border-[#fbdcdc]" />
    <div className="relative h-[199px]">
      {asks.map((r) => <BookRow key={r[0]} row={r} side="ask" />)}
      <div className="absolute right-[1px] top-[89px] h-[108px] w-[4px] rounded-full bg-[#d8d8d8]" />
    </div>
    <div className="flex h-[47px] items-center justify-between bg-[#f2f2f2] pl-[11px] pr-[10px]">
      <div>
        <div className="text-[18px] font-bold leading-[18px] text-[#333]">547.40</div>
        <div className="mt-[3px] text-[11.5px] leading-[14px] text-[#aaa]">$547.40</div>
      </div>
      <div className="text-right text-[#12b981]">
        <div className="text-[11.5px] leading-[15px]">+0.10%</div>
        <div className="text-[12.5px] font-bold leading-[15px]">+0.57</div>
      </div>
    </div>
    <div className="relative h-[200px]">
      {bids.map((r) => <BookRow key={r[0]} row={r} side="bid" />)}
      <div className="ml-auto mr-[7px] mt-px h-4 w-[63px] bg-[#e5f7f0]" />
      <div className="absolute right-[1px] top-[2px] h-[108px] w-[4px] rounded-full bg-[#d8d8d8]" />
    </div>
  </div>
);

const TradeList = () => (
  <div className="h-[253px] overflow-hidden">
    <div className="flex h-[37px] items-center border-b border-[#ececec] pl-[8px] text-[12.5px] text-[#777]">
      <span className="flex h-[22px] w-[65px] items-center justify-center rounded bg-[#e6e6e6] text-[#333]">最新成交</span>
      <span className="ml-[15px]">大额成交</span>
      <span className="ml-[35px] size-[13px] rounded-[2px] border border-[#777]" />
      <span className="ml-[5px]">极速</span>
      <svg width="12" height="12" viewBox="0 0 12 12" className="ml-[12px]" fill="none" stroke="#777">
        <path d="M2.500.5v9M.5 7.500l2 2.200M6 1.500h6M6 6h5M0 11.300h12" />
      </svg>
      <span className="ml-[10px]"><HexIcon /></span>
    </div>
    <div className="flex h-[26px] items-center pl-[11px] text-[12.5px] text-[#777]">
      <span className="w-[82px]">价格(USDT)</span>
      <span className="flex w-[85px] items-center justify-end">数量(BNB)<Caret /></span>
      <span className="w-[84px] text-right">成交时间</span>
    </div>
    <div className="relative">
      {trades.map(([price, qty, time, up], i) => (
        <div key={i} className={clsx("mr-[7px] flex h-[18.15px] items-center pl-[11px] text-[11.5px] text-[#444]", i < 2 && "bg-[#e6e6e6]")}>
          <span className={clsx("w-[70px] text-[12px]", up ? "text-[#0cb57c]" : "text-[#ee4652]")}>{price}</span>
          <span className="w-[97px] text-right">{qty}</span>
          <span className="w-[84px] text-right">{time}</span>
        </div>
      ))}
      <div className="absolute right-[1px] top-[2px] h-[50px] w-[4px] rounded-full bg-[#d8d8d8]" />
    </div>
  </div>
);

// ----- Right icon rail -----
const SideRail = () => (
  <div className="flex w-[41px] shrink-0 flex-col items-center border-r border-[#9a9a9a] bg-white">
    <svg width="18" height="18" viewBox="0 0 18 18" className="mt-[7px]" fill="none" stroke="#666" strokeWidth="1.2">
      <path d="M4.200 14.500V2.500a1 1 0 0 1 1-1h10.300a1 1 0 0 1 1 1v12.500a1 1 0 0 1-1 1H3a1.700 1.700 0 0 1-1.700-1.700V11h2.900" />
      <path d="M12.200 6.800c-.4-1-3.500-1.200-3.500.5 0 1.600 3.700.8 3.700 2.500 0 1.700-3.400 1.500-3.900.2M10.500 4.800v7.500" strokeWidth="1" />
    </svg>
    <svg width="16" height="18" viewBox="0 0 16 18" className="mt-[33px]" fill="none" stroke="#777" strokeWidth="1.2">
      <path d="M2 17v-3.500M5.200 17v-5.500M8.400 17v-4.500M11.600 17v-6.500M14.500 17V8.500M1.500 9.300c5 0 9-3 12.300-6.600M9.500 1.800l4.700.5.200 4.200" />
    </svg>
    <svg width="18" height="17" viewBox="0 0 18 17" className="mt-[33px]" fill="none" stroke="#666" strokeWidth="1.3">
      <path d="M1.200 1.200h15.600v11.500H1.200zM5 16h8M5.800 7v3.500M9 4.500v6M12.200 6v4.500" />
    </svg>
    <svg width="19" height="16" viewBox="0 0 19 16" className="mt-[33px]" fill="none" stroke="#666" strokeWidth="1.2">
      <path d="M.8 3.500h14.500v10.800H.8zM3 1.200h15v10.300" />
      <text x="8.1" y="11.3" textAnchor="middle" className="fill-[#666] text-[6px]" stroke="none">ETF</text>
    </svg>
    <svg width="18" height="18" viewBox="0 0 18 18" className="mt-[35px]" fill="none" stroke="#2e2e2e" strokeWidth="1.8">
      <rect x="2.8" y="6" width="12.4" height="9.5" rx="2.5" />
      <path d="M.9 8.500v4.500M17.100 8.500v4.500" />
      <path d="M6.800 9.800v2M11.200 9.800v2" />
      <path d="M9 5V3.500" stroke="#e8553f" strokeWidth="1.300" />
      <circle cx="9.3" cy="1.9" r="1.3" fill="#f0492f" stroke="none" />
    </svg>
    <div className="mt-[15px] h-px w-full bg-[#e4e4e4]" />
    <svg width="15" height="15" viewBox="0 0 15 15" className="mt-[24px]" fill="none" stroke="#777" strokeWidth="1.1">
      <path d="M2.800 12.300A6.700 6.700 0 0 1 10 1.300M12.200 2.700A6.700 6.700 0 0 1 5 13.700M3.800 6.500h7.400L9.200 4.500M11.200 8.700H3.800l2 2" />
    </svg>
  </div>
);

function App() {
  return (
    <div className="flex h-[828px] w-[1966px] overflow-hidden bg-white font-['Roboto','Noto_Sans_CJK_SC',sans-serif]">
      <ChartArea />
      <div className="w-[272px] shrink-0 bg-white">
        <OrderBook />
        <TradeList />
      </div>
      <div className="w-[3px] shrink-0 bg-[#f0f0f0]" />
      <SideRail />
    </div>
  );
}

export default App;
